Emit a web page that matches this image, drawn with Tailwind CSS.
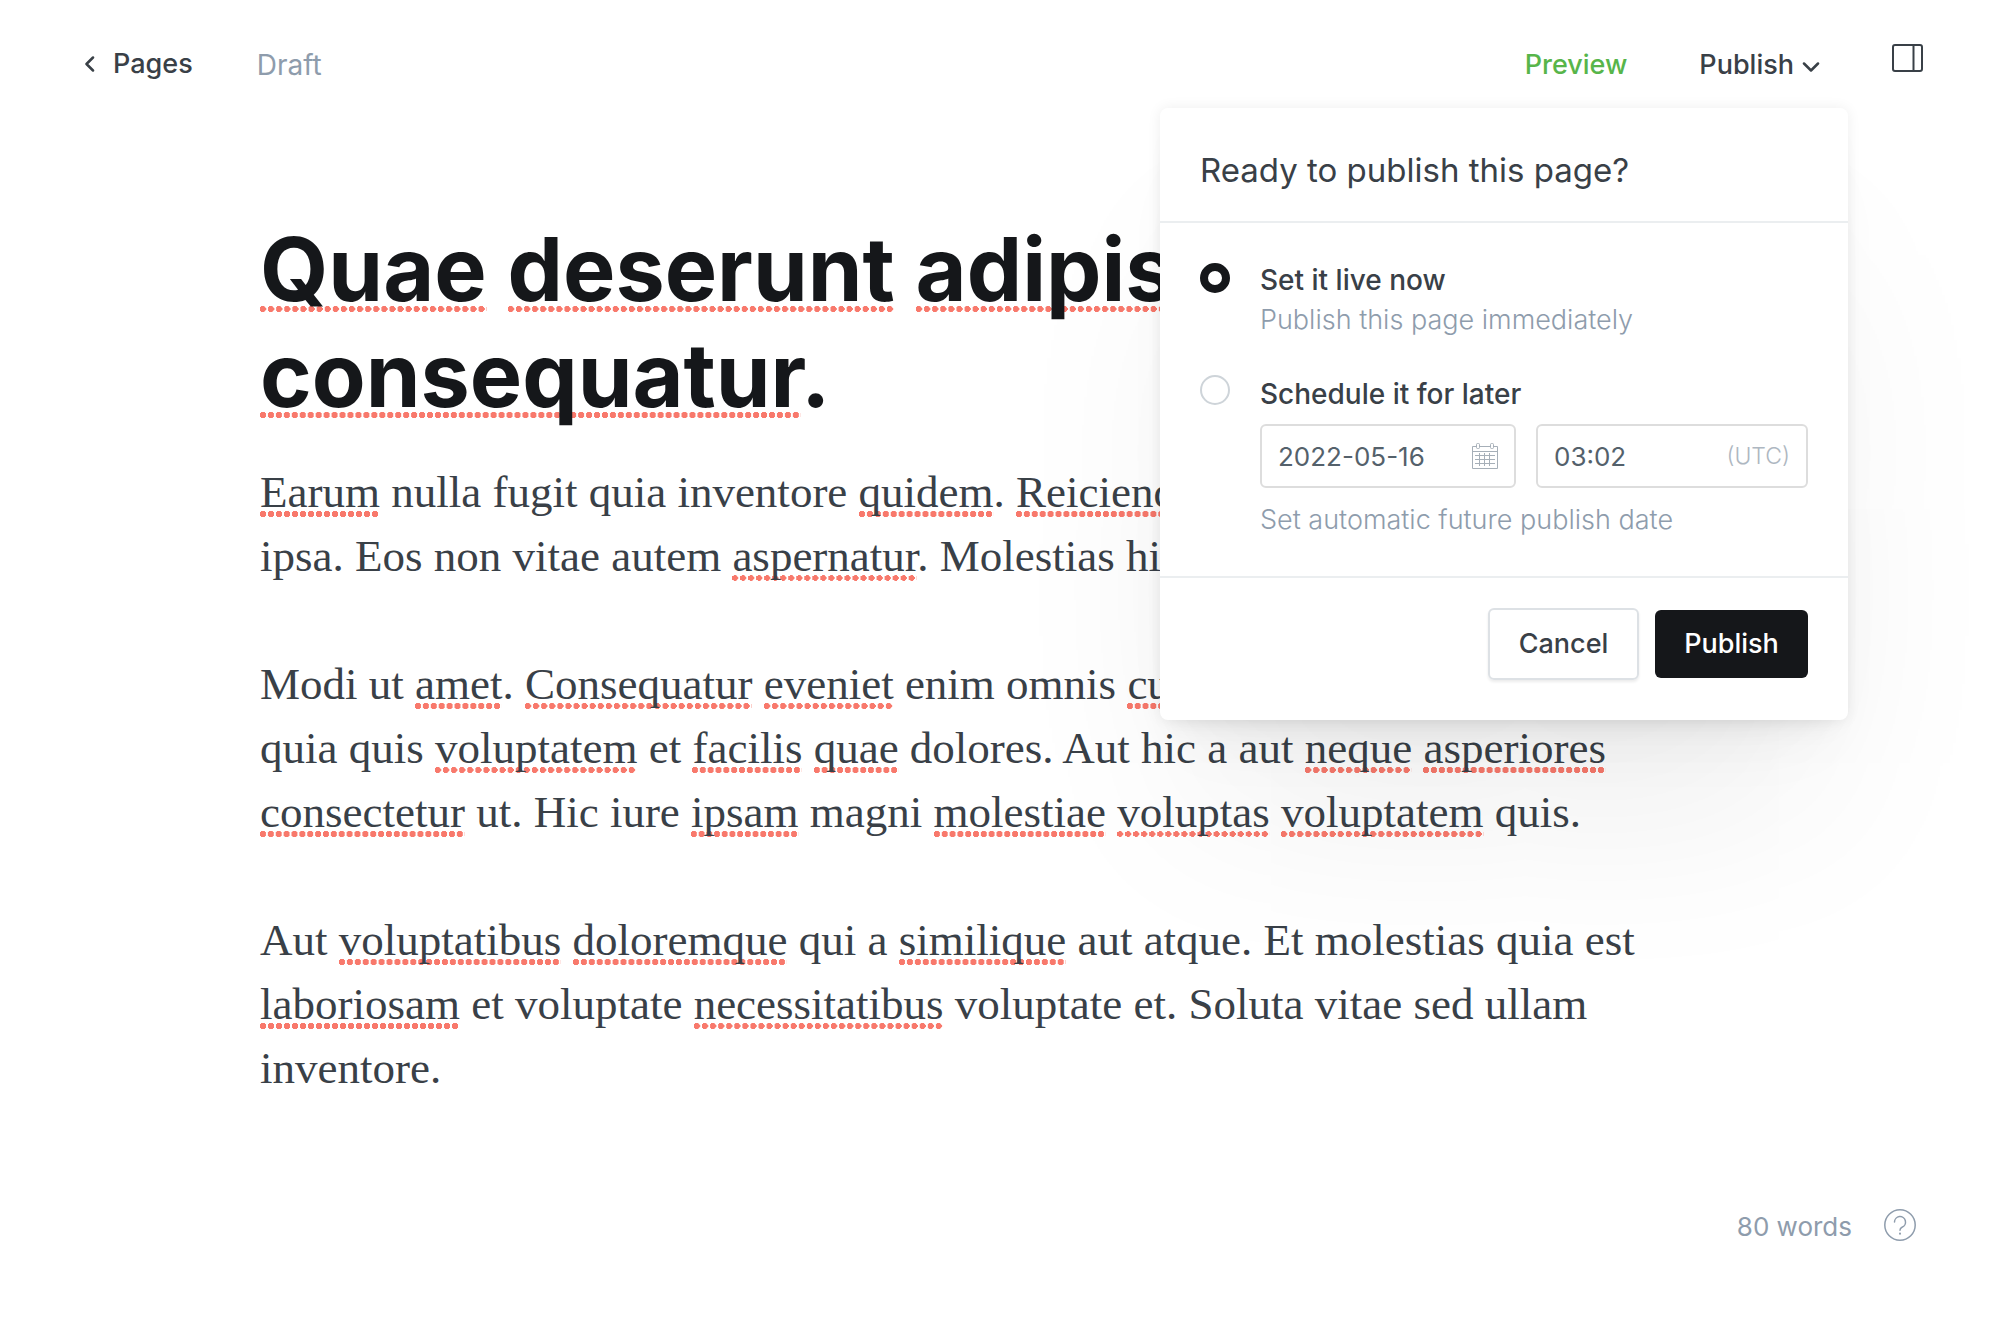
<!DOCTYPE html>
<html lang="en">
<head>
<meta charset="utf-8">
<meta name="viewport" content="width=device-width, initial-scale=1">
<title>Page editor</title>
<script src="https://cdn.jsdelivr.net/npm/@tailwindcss/browser@4"></script>
</head>
<body class="bg-white font-['Inter',sans-serif] text-[#394047]">
<div class="relative flex min-h-screen flex-col overflow-x-clip">
  <header class="flex h-32 items-center justify-between pr-[77px] pl-[84px]">
    <div class="flex items-center gap-16">
      <a href="#" class="flex items-center gap-[18px] text-[27px] font-medium">
        <svg class="h-4 w-[11px]" viewBox="0 0 11 16" fill="none" stroke="currentColor" stroke-width="2.500" stroke-linecap="round" stroke-linejoin="round"><path d="M9 1.500 2.500 8l6.500 6.500"/></svg>
        Pages
      </a>
      <span class="pt-0.5 text-[28px] text-[#8e9cac]">Draft</span>
    </div>
    <div class="flex items-center gap-[72px]">
      <button type="button" class="pt-0.5 text-[27px] font-medium text-[#57b54a]">Preview</button>
      <button type="button" class="flex items-center gap-2 pt-0.5 text-[27px] font-medium">Publish
        <svg class="mt-1 h-[10px] w-[18px]" viewBox="0 0 18 10" fill="none" stroke="currentColor" stroke-width="2.500" stroke-linecap="round" stroke-linejoin="round"><path d="m2 1.500 7 7 7-7"/></svg>
      </button>
      <button type="button" aria-label="Settings" class="mb-3">
        <svg class="block h-7 w-[31px]" viewBox="0 0 31 28" fill="none" stroke="currentColor" stroke-width="2"><rect x="1" y="1" width="29" height="26" rx="2"/><path d="M21.500 1v26"/></svg>
      </button>
    </div>
  </header>

  <main class="mx-auto w-full max-w-[1480px] pt-[88px]">
    <h1 class="text-[88px] leading-[106px] font-bold text-[#15171a] [&_u]:bg-[radial-gradient(circle_at_3px_3px,#f8796c_3px,transparent_3px)] [&_u]:[background-size:8px_6px] [&_u]:[background-repeat:round_no-repeat] [&_u]:[background-position:0_calc(100%-10px)] [&_u]:no-underline"><u>Quae</u> <u>deserunt</u> <u>adipis</u><br><u>consequatur</u>.</h1>
    <div class="mt-8 flex flex-col gap-16 font-['Georgia','Liberation_Serif',serif] text-[45px] leading-[64px] [&_u]:bg-[radial-gradient(circle_at_3px_3px,#f8796c_3px,transparent_3px)] [&_u]:[background-size:8px_6px] [&_u]:[background-repeat:round_no-repeat] [&_u]:[background-position:0_100%] [&_u]:no-underline">
      <p><u>Earum</u> nulla fugit quia inventore <u>quidem</u>. <u>Reiciendis</u><br>ipsa. Eos non vitae autem <u>aspernatur</u>. Molestias hic.</p>
      <p>Modi ut <u>amet</u>. <u>Consequatur</u> <u>eveniet</u> enim omnis <u>cum</u><br>quia quis <u>voluptatem</u> et <u>facilis</u> <u>quae</u> dolores. Aut hic a aut <u>neque</u> <u>asperiores</u><br><u>consectetur</u> ut. Hic iure <u>ipsam</u> magni <u>molestiae</u> <u>voluptas</u> <u>voluptatem</u> quis.</p>
      <p>Aut <u>voluptatibus</u> <u>doloremque</u> qui a <u>similique</u> aut atque. Et molestias quia est<br><u>laboriosam</u> et voluptate <u>necessitatibus</u> voluptate et. Soluta vitae sed ullam<br>inventore.</p>
    </div>
  </main>

  <footer class="mt-auto flex items-center justify-end gap-8 pr-[84px] pb-[74px] text-[#8e9cac]">
    <span class="pt-1 text-[26px]">80 words</span>
    <button type="button" aria-label="Help">
      <svg class="block size-8" viewBox="0 0 32 32" fill="none" stroke="currentColor" stroke-width="1.500" stroke-linecap="round"><circle cx="16" cy="16" r="15.200"/><path d="M10.500 13a5.500 5.500 0 1 1 7.500 5.200q-2 .8-2 3"/><path d="M16 24.500v.3" stroke-width="2"/></svg>
    </button>
  </footer>

  <form class="absolute top-[108px] right-[152px] w-[688px] rounded-lg bg-white shadow-[0_0_14px_rgba(0,0,0,0.07),0_18px_26px_-14px_rgba(0,0,0,0.07),0_45px_70px_-30px_rgba(0,0,0,0.05),0_120px_200px_-40px_rgba(0,0,0,0.08)]">
    <h2 class="border-b-2 border-[#ebeef0] px-10 pt-[43px] pb-8 text-[33px] leading-[38px]">Ready to publish this page?</h2>
    <div class="flex flex-col gap-9 px-10 pt-[38px] pb-[37px]">
      <div class="flex items-start gap-[30px]">
        <input id="now" type="radio" name="when" checked class="mt-0.5 size-[30px] shrink-0 appearance-none rounded-full border-8 border-[#15171a]">
        <label for="now" class="text-[28px] leading-[39px] font-medium">Set it live now<br><span class="text-[27px] font-light text-[#8e9cac]">Publish this page immediately</span></label>
      </div>
      <div class="flex items-start gap-[30px]">
        <input id="later" type="radio" name="when" class="size-[30px] shrink-0 appearance-none rounded-full border-2 border-[#ced4d9]">
        <div class="flex grow flex-col">
          <label for="later" class="text-[28px] leading-[39px] font-medium">Schedule it for later</label>
          <div class="mt-2.5 flex gap-5">
            <div class="flex h-16 w-64 items-center rounded-md border-2 border-[#dddddd] pr-4 pl-4 text-[#54616b]">
              <input aria-label="Date" value="2022-05-16" class="w-0 grow text-[26px] outline-none">
              <svg class="size-[26px] shrink-0 text-[#a6afb8]" viewBox="0 0 26 26" fill="none" stroke="currentColor" stroke-width="1"><path d="M4.500 3.500h-4v22h25v-22h-4M7.500 3.500h11M.5 8.500h25M3 12.500h20M3 16.500h20M3 20.500h20M7.500 10v13M12.500 10v13M17.500 10v13"/><rect x="4.500" y=".5" width="3" height="5" rx="1"/><rect x="18.500" y=".5" width="3" height="5" rx="1"/></svg>
            </div>
            <div class="flex h-16 w-[272px] items-center rounded-md border-2 border-[#dddddd] pr-4 pl-4 text-[#54616b]">
              <input aria-label="Time" value="03:02" class="w-0 grow text-[26px] outline-none">
              <span class="text-[23px] font-light text-[#aeb7c1]">(UTC)</span>
            </div>
          </div>
          <p class="mt-3 text-[27px] leading-[39px] font-light text-[#8e9cac]">Set automatic future publish date</p>
        </div>
      </div>
    </div>
    <div class="flex items-center justify-end gap-4 border-t-2 border-[#ebeef0] px-10 pt-[30px] pb-10">
      <button type="button" class="h-[72px] w-[151px] rounded-md border-2 border-[#dde1e5] text-[27px] font-medium shadow-[0_2px_3px_rgba(0,0,0,0.08)]">Cancel</button>
      <button type="submit" class="h-[68px] w-[153px] rounded-md bg-[#15171a] text-[27px] font-medium text-white">Publish</button>
    </div>
  </form>
</div>
</body>
</html>
